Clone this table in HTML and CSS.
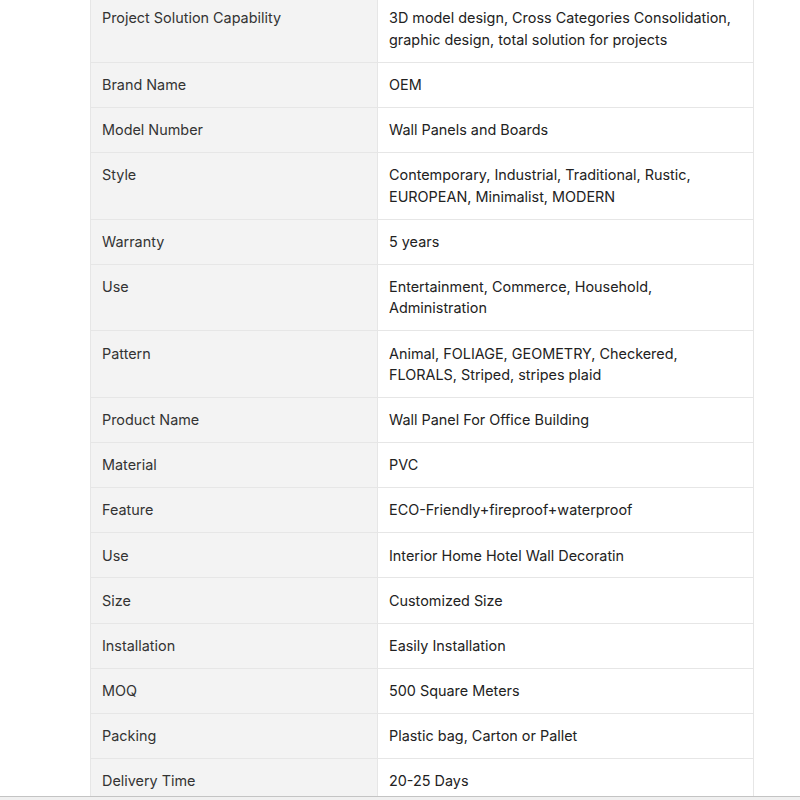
FILE: index.html
```html
<!DOCTYPE html>
<html>
<head>
<meta charset="utf-8">
<link rel="stylesheet" href="styles.css">
</head>
<body>
<div class="page">
<table class="spec">
<tbody>
<tr><td class="k">Project Solution Capability</td><td class="v">3D model design, Cross Categories Consolidation, graphic design, total solution for projects</td></tr>
<tr><td class="k">Brand Name</td><td class="v">OEM</td></tr>
<tr><td class="k">Model Number</td><td class="v">Wall Panels and Boards</td></tr>
<tr><td class="k">Style</td><td class="v">Contemporary, Industrial, Traditional, Rustic, EUROPEAN, Minimalist, MODERN</td></tr>
<tr><td class="k">Warranty</td><td class="v">5 years</td></tr>
<tr><td class="k">Use</td><td class="v">Entertainment, Commerce, Household, Administration</td></tr>
<tr><td class="k">Pattern</td><td class="v">Animal, FOLIAGE, GEOMETRY, Checkered, FLORALS, Striped, stripes plaid</td></tr>
<tr><td class="k">Product Name</td><td class="v">Wall Panel For Office Building</td></tr>
<tr><td class="k">Material</td><td class="v">PVC</td></tr>
<tr><td class="k">Feature</td><td class="v">ECO-Friendly+fireproof+waterproof</td></tr>
<tr><td class="k">Use</td><td class="v">Interior Home Hotel Wall Decoratin</td></tr>
<tr><td class="k">Size</td><td class="v">Customized Size</td></tr>
<tr><td class="k">Installation</td><td class="v">Easily Installation</td></tr>
<tr><td class="k">MOQ</td><td class="v">500 Square Meters</td></tr>
<tr><td class="k">Packing</td><td class="v">Plastic bag, Carton or Pallet</td></tr>
<tr><td class="k">Delivery Time</td><td class="v">20-25 Days</td></tr>
</tbody>
</table>
</div>
<div class="bottom-bar"></div>
</body>
</html>
```

FILE: styles.css
```css
html, body {
  margin: 0;
  padding: 0;
  background: #ffffff;
  overflow: hidden;
}
body {
  font-family: Inter, "Noto Sans", sans-serif;
  font-size: 14.4px;
  color: #222;
}
.page {
  padding-left: 90px;
  margin-top: -5px;
}
.spec {
  border-collapse: collapse;
  width: 664px;
  table-layout: fixed;
}
.spec td {
  border: 1px solid #e6e6e6;
  padding: 11.32px 11px;
  line-height: 21.5px;
  vertical-align: top;
  text-align: left;
}
.spec td.k {
  width: 264px;
  background: #f3f3f3;
  color: #333;
}
.spec td.v {
  background: #fff;
  color: #222;
}
.bottom-bar {
  position: fixed;
  left: 0;
  right: 0;
  bottom: 0;
  height: 3px;
  border-top: 1px solid #c4c4c4;
  background: #f0f0f0;
}
```
